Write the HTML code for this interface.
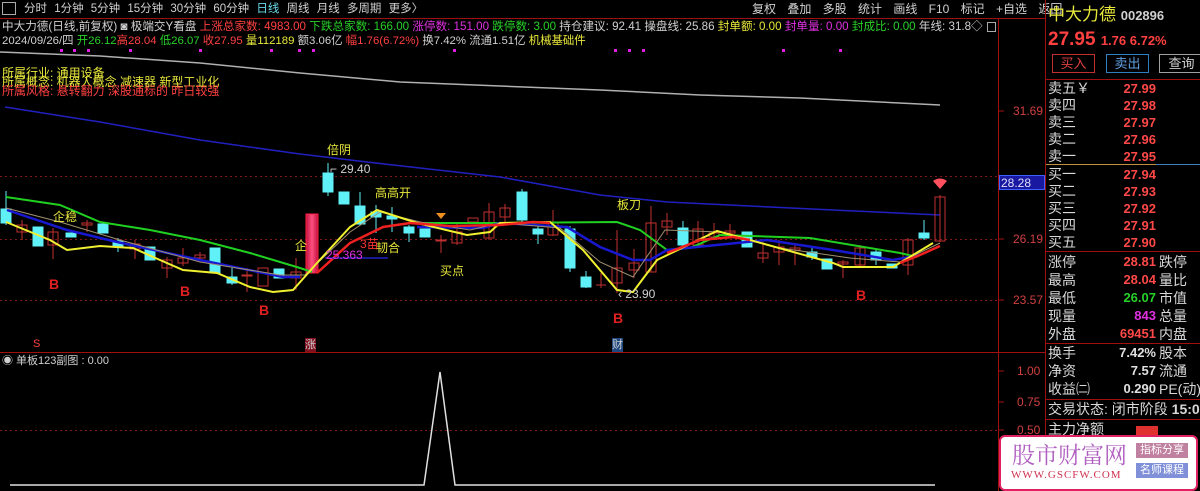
<!DOCTYPE html><html><head><meta charset="utf-8"><style>
*{margin:0;padding:0;box-sizing:border-box}
body{width:1200px;height:491px;background:#000;overflow:hidden;position:relative;font-family:"Liberation Sans","Noto Sans CJK SC",sans-serif;font-size:12px;color:#c8c8c8}
.a{position:absolute;white-space:nowrap;line-height:14px}
.y{color:#e8e83c}.r{color:#ff4040}.g{color:#28d028}.m{color:#e030e0}.w{color:#d0d0d0}.cy{color:#6ad8e8}
.rp{position:absolute;left:1048px;font-size:14px;line-height:17px;color:#d8d8d8}
.rv{position:absolute;font-size:13px;font-weight:bold;line-height:17px;color:#ff4848;text-align:right}
</style></head><body>
<!-- toolbar -->
<div class="a" style="left:2px;top:2px;width:14px;height:13px;border:1px solid #aaa"></div>
<div class="a w" style="left:24px;top:2px;word-spacing:4px;font-size:11.5px">分时 1分钟 5分钟 15分钟 30分钟 60分钟 <span class="cy">日线</span> 周线 月线 多周期 更多〉</div>
<div class="a w" style="left:752px;top:2px;word-spacing:8px">复权 叠加 多股 统计 画线 F10 标记 +自选 返回</div>
<div class="a" style="left:0;top:18px;width:1045px;height:1px;background:#a01010"></div>
<div class="a w" style="left:2px;top:20px;font-size:11.6px">中大力德(日线,前复权) ◙ 极端交Y看盘 <span class="r">上涨总家数: 4983.00</span> <span class="g">下跌总家数: 166.00</span> <span class="m">涨停数: 151.00</span> <span class="g">跌停数: 3.00</span> 持仓建议: 92.41 操盘线: 25.86 <span class="y">封单额: 0.00</span> <span class="m">封单量: 0.00</span> <span class="g">封成比: 0.00</span> 年线: 31.8◇</div>
<div class="a" style="left:987px;top:22px;width:9px;height:10px;border:1px solid #aaa"></div>
<div class="a w" style="left:2px;top:34px;font-size:11.4px">2024/09/26/四 <span class="g">开26.12</span><span class="r">高28.04</span> <span class="g">低26.07</span> <span class="r">收27.95</span> <span class="y">量112189</span> 额3.06亿 <span class="r">幅1.76(6.72%)</span> 换7.42% 流通1.51亿 <span class="y">机械基础件</span></div>
<div class="a y" style="left:2px;top:66px">所属行业: 通用设备</div>
<div class="a y" style="left:2px;top:75px">所属概念: 机器人概念 减速器 新型工业化</div>
<div class="a r" style="left:2px;top:84px">所属风格: 悬转翻力 深股通标的 昨日较强</div>
<svg class="a" style="left:0;top:0" width="1045" height="491">
<g fill="#e020e0"><rect x="60" y="49" width="3" height="3"/><rect x="73" y="49" width="3" height="3"/><rect x="87" y="49" width="3" height="3"/><rect x="129" y="49" width="3" height="3"/><rect x="199" y="49" width="3" height="3"/><rect x="270" y="49" width="3" height="3"/><rect x="298" y="49" width="3" height="3"/><rect x="312" y="49" width="3" height="3"/><rect x="453" y="49" width="3" height="3"/><rect x="614" y="49" width="3" height="3"/><rect x="628" y="49" width="3" height="3"/><rect x="642" y="49" width="3" height="3"/><rect x="782" y="49" width="3" height="3"/><rect x="839" y="49" width="3" height="3"/></g>
<line x1="998.5" y1="18" x2="998.5" y2="491" stroke="#a01010"/>
<line x1="0" y1="352.5" x2="1045" y2="352.5" stroke="#a01010"/>
<g stroke="#801818" stroke-dasharray="2,3"><line x1="0" y1="176.5" x2="998" y2="176.5"/><line x1="0" y1="239.5" x2="998" y2="239.5"/><line x1="0" y1="300.5" x2="998" y2="300.5"/><line x1="0" y1="430.5" x2="998" y2="430.5"/></g>
<g stroke="#a01010"><line x1="999" y1="111" x2="1004" y2="111"/><line x1="999" y1="239" x2="1004" y2="239"/><line x1="999" y1="300" x2="1004" y2="300"/><line x1="999" y1="371" x2="1004" y2="371"/><line x1="999" y1="402" x2="1004" y2="402"/><line x1="999" y1="430" x2="1004" y2="430"/></g>
<polyline fill="none" stroke="#b0b0b0" stroke-width="1.5" points="0,52 100,56 200,63 300,73 400,82 500,86 600,90 700,95 800,98 940,105"/>
<polyline fill="none" stroke="#2020c0" stroke-width="1.5" points="5,107 100,122 200,140 300,154 367,162 500,177 600,195 667,202 833,210 940,215"/>
<g stroke="#c03030" fill="none">
<line x1="22" y1="220" x2="22" y2="240"/><rect x="17" y="225" width="10" height="7"/>
<line x1="53" y1="228" x2="53" y2="259"/><rect x="48" y="232" width="10" height="13"/>
<line x1="87" y1="220" x2="87" y2="232"/><rect x="82" y="223" width="10" height="2"/>
<line x1="135" y1="240" x2="135" y2="259"/><rect x="130" y="244" width="10" height="5"/>
<line x1="167" y1="257" x2="167" y2="278"/><rect x="162" y="260" width="10" height="8"/>
<line x1="183" y1="248" x2="183" y2="266"/><rect x="178" y="258" width="10" height="5"/>
<line x1="200" y1="252" x2="200" y2="262"/><rect x="195" y="255" width="10" height="3"/>
<line x1="247" y1="268" x2="247" y2="292"/><rect x="242" y="275" width="10" height="1"/>
<rect x="258" y="268" width="10" height="18"/>
<line x1="296" y1="258" x2="296" y2="290"/><rect x="291" y="272" width="10" height="6"/>
<line x1="441" y1="235" x2="441" y2="253"/><rect x="436" y="240" width="10" height="1"/>
<rect x="452" y="232" width="10" height="11"/><line x1="457" y1="222" x2="457" y2="245"/>
<rect x="468" y="218" width="10" height="4"/>
<line x1="489" y1="203" x2="489" y2="240"/><rect x="484" y="212" width="10" height="26"/>
<line x1="505" y1="204" x2="505" y2="222"/><rect x="500" y="208" width="10" height="9"/>
<line x1="553" y1="210" x2="553" y2="236"/><rect x="548" y="222" width="10" height="13"/>
<line x1="601" y1="273" x2="601" y2="288"/><line x1="596" y1="285" x2="606" y2="285"/>
<line x1="617" y1="230" x2="617" y2="293"/><rect x="612" y="268" width="10" height="15"/>
<line x1="634" y1="249" x2="634" y2="278"/><rect x="629" y="263" width="10" height="7"/>
<line x1="651" y1="206" x2="651" y2="272"/><rect x="646" y="223" width="10" height="49"/>
<line x1="667" y1="213" x2="667" y2="235"/><rect x="662" y="221" width="10" height="6"/>
<line x1="698" y1="221" x2="698" y2="246"/><rect x="693" y="229" width="10" height="16"/>
<line x1="714" y1="223" x2="714" y2="240"/><rect x="709" y="233" width="10" height="4"/>
<line x1="730" y1="224" x2="730" y2="238"/><rect x="725" y="231" width="10" height="2"/>
<line x1="763" y1="242" x2="763" y2="263"/><rect x="758" y="253" width="10" height="5"/>
<line x1="779" y1="240" x2="779" y2="265"/><rect x="774" y="247" width="10" height="5"/>
<line x1="795" y1="245" x2="795" y2="265"/><rect x="790" y="248" width="10" height="2"/>
<line x1="843" y1="260" x2="843" y2="278"/><rect x="838" y="262" width="10" height="2"/>
<line x1="860" y1="245" x2="860" y2="266"/><rect x="855" y="248" width="10" height="17"/>
<line x1="908" y1="238" x2="908" y2="275"/><rect x="903" y="240" width="10" height="25"/>
<line x1="940" y1="195" x2="940" y2="242"/><rect x="935" y="197" width="10" height="44"/>
</g>
<g fill="#60f0f8" stroke="#60f0f8">
<line x1="6" y1="191" x2="6" y2="225"/><rect x="1" y="209" width="10" height="14"/>
<rect x="33" y="227" width="10" height="19"/>
<rect x="66" y="233" width="10" height="4"/>
<rect x="98" y="224" width="10" height="9"/>
<line x1="118" y1="238" x2="118" y2="252"/><rect x="113" y="241" width="10" height="6"/>
<rect x="145" y="247" width="10" height="13"/>
<rect x="210" y="248" width="10" height="25"/>
<line x1="232" y1="268" x2="232" y2="285"/><rect x="227" y="277" width="10" height="6"/>
<rect x="274" y="269" width="10" height="9"/>
<line x1="328" y1="163" x2="328" y2="196"/><rect x="323" y="173" width="10" height="19"/>
<rect x="339" y="192" width="10" height="12"/>
<line x1="360" y1="192" x2="360" y2="225"/><rect x="355" y="206" width="10" height="18"/>
<line x1="376" y1="205" x2="376" y2="233"/><rect x="371" y="212" width="10" height="5"/>
<line x1="392" y1="207" x2="392" y2="232"/><rect x="387" y="216" width="10" height="3"/>
<line x1="409" y1="225" x2="409" y2="242"/><rect x="404" y="227" width="10" height="6"/>
<rect x="420" y="229" width="10" height="8"/>
<line x1="522" y1="189" x2="522" y2="222"/><rect x="517" y="192" width="10" height="28"/>
<line x1="538" y1="226" x2="538" y2="244"/><rect x="533" y="229" width="10" height="5"/>
<line x1="570" y1="226" x2="570" y2="272"/><rect x="565" y="229" width="10" height="39"/>
<line x1="586" y1="271" x2="586" y2="288"/><rect x="581" y="277" width="10" height="10"/>
<line x1="683" y1="221" x2="683" y2="246"/><rect x="678" y="228" width="10" height="17"/>
<rect x="742" y="232" width="10" height="15"/>
<line x1="812" y1="247" x2="812" y2="260"/><rect x="807" y="252" width="10" height="5"/>
<rect x="822" y="259" width="10" height="10"/>
<line x1="876" y1="249" x2="876" y2="265"/><rect x="871" y="252" width="10" height="8"/>
<rect x="887" y="264" width="10" height="4"/>
<line x1="924" y1="220" x2="924" y2="240"/><rect x="919" y="233" width="10" height="5"/>
</g>
<defs><linearGradient id="pk" x1="0" x2="1"><stop offset="0" stop-color="#c01040"/><stop offset=".5" stop-color="#ff5080"/><stop offset="1" stop-color="#c01040"/></linearGradient></defs>
<rect x="306" y="214" width="12" height="59" fill="url(#pk)" stroke="#ff2040"/>
<polyline fill="none" stroke="#20d020" stroke-width="2" points="6,197 60,205 100,222 150,230 200,240 250,253 300,268 312,272"/>
<polyline fill="none" stroke="#20d020" stroke-width="2" points="410,223 500,223 617,222 640,230 667,250 690,248 720,235 810,238 900,253 917,257"/>
<polyline fill="none" stroke="#1818d0" stroke-width="2.5" points="7,210 67,230 117,242 200,260 283,277 300,277"/>
<polyline fill="none" stroke="#1818d0" stroke-width="2.5" points="417,227 483,228 500,223 567,227 600,247 633,260 650,260 667,250 767,240 833,250 893,260 920,255"/>
<polyline fill="none" stroke="#a09070" stroke-width="1" points="6,208 60,222 120,240 200,262 280,275 305,275 350,232 380,212 420,222 470,230 500,223 560,228 600,262 633,277 665,230 720,232 780,248 850,258 900,262 940,243"/>
<polyline fill="none" stroke="#f0f030" stroke-width="2" points="6,222 50,240 67,250 100,246 133,248 160,260 183,270 217,273 250,287 273,292 293,290 317,263 350,227 377,210 417,223 467,235 490,232 500,223 550,222 583,250 617,290 633,292 657,260 717,231 750,240 833,263 843,267 893,267 933,243"/>
<polyline fill="none" stroke="#f02020" stroke-width="2.5" points="317,273 350,243 383,227 410,223 450,226 500,225 533,222 550,223"/>
<polyline fill="none" stroke="#f02020" stroke-width="2.5" points="667,253 700,240 733,237 750,240"/>
<polyline fill="none" stroke="#f02020" stroke-width="2.5" points="900,263 920,255 940,246"/>
<line x1="325" y1="258" x2="388" y2="258" stroke="#2020c0" stroke-width="1.5"/>
<path d="M436 213h10l-5 6z" fill="#f09020"/>
<path d="M933 181 Q940 176 947 181 L940 189z" fill="#ff5060"/>
<polyline fill="none" stroke="#e0e0e0" stroke-width="1.5" points="10,485 424,485 440,372 455,485 935,485"/>
</svg>
<div class="a y" style="left:327px;top:143px">倍阴</div>
<div class="a w" style="left:330px;top:162px">⌐ 29.40</div>
<div class="a y" style="left:375px;top:186px">高高开</div>
<div class="a y" style="left:53px;top:210px">企稳</div>
<div class="a y" style="left:295px;top:239px">企</div>
<div class="a" style="left:360px;top:237px;color:#ff3030">3苗</div>
<div class="a y" style="left:376px;top:241px">韧合</div>
<div class="a m" style="left:326px;top:248px">25.363</div>
<div class="a y" style="left:440px;top:264px">买点</div>
<div class="a y" style="left:617px;top:198px">板刀</div>
<div class="a w" style="left:618px;top:287px">‹ 23.90</div>
<div class="a" style="color:#e02020;font-size:14px;font-weight:bold;left:49px;top:277px">B</div>
<div class="a" style="color:#e02020;font-size:14px;font-weight:bold;left:180px;top:284px">B</div>
<div class="a" style="color:#e02020;font-size:14px;font-weight:bold;left:259px;top:303px">B</div>
<div class="a" style="color:#e02020;font-size:14px;font-weight:bold;left:613px;top:311px">B</div>
<div class="a" style="color:#e02020;font-size:14px;font-weight:bold;left:856px;top:288px">B</div>
<div class="a r" style="left:33px;top:337px;font-size:11px">S</div>
<div class="a w" style="left:305px;top:338px;background:#801020;font-size:11px">涨</div>
<div class="a w" style="left:612px;top:338px;background:#204880;font-size:11px">财</div>
<div class="a w" style="left:2px;top:354px;font-size:11px">◉ 单板123副图 : 0.00</div>
<div class="a" style="left:1013px;top:104px;color:#d04040">31.69</div>
<div class="a" style="left:999px;top:175px;width:46px;height:15px;background:#1818a0;border:1px solid #4060ff;color:#e0e0ff;padding-left:1px">28.28</div>
<div class="a" style="left:1013px;top:232px;color:#d04040">26.19</div>
<div class="a" style="left:1013px;top:293px;color:#d04040">23.57</div>
<div class="a" style="left:1017px;top:364px;color:#d04040">1.00</div>
<div class="a" style="left:1017px;top:395px;color:#d04040">0.75</div>
<div class="a" style="left:1017px;top:423px;color:#d04040">0.50</div>
<!-- right panel -->
<div class="a" style="left:1045px;top:0;width:1px;height:491px;background:#a01010"></div>
<div class="a y" style="left:1048px;top:5px;font-size:17px;line-height:20px">中大力德 <span class="w" style="font-size:13px;font-weight:bold">002896</span></div>
<div class="a r" style="left:1048px;top:30px;font-size:19px;font-weight:bold;line-height:20px">27.95 <span style="font-size:13px">1.76 6.72%</span></div>
<div class="a" style="left:1052px;top:54px;width:43px;height:19px;border:1px solid #c03030;color:#e04040;text-align:center;font-size:13px;line-height:17px">买入</div>
<div class="a" style="left:1106px;top:54px;width:43px;height:19px;border:1px solid #3080c0;color:#60a0e0;text-align:center;font-size:13px;line-height:17px">卖出</div>
<div class="a" style="left:1159px;top:54px;width:45px;height:19px;border:1px solid #a0a0a0;color:#d0d0d0;text-align:center;font-size:13px;line-height:17px">查询</div>
<div class="a" style="left:1046px;top:79px;width:154px;height:1px;background:#a01010"></div>
<div class="rp" style="top:80px">卖五￥<br>卖四<br>卖三<br>卖二<br>卖一</div>
<div class="rv" style="left:1110px;top:80px;width:46px">27.99<br>27.98<br>27.97<br>27.96<br>27.95</div>
<div class="a" style="left:1046px;top:164px;width:110px;height:1px;background:#c09040"></div>
<div class="a" style="left:1156px;top:164px;width:44px;height:1px;background:#4080c0"></div>
<div class="rp" style="top:166px">买一<br>买二<br>买三<br>买四<br>买五</div>
<div class="rv" style="left:1110px;top:166px;width:46px">27.94<br>27.93<br>27.92<br>27.91<br>27.90</div>
<div class="a" style="left:1046px;top:251px;width:154px;height:1px;background:#a01010"></div>
<div class="rp" style="top:253px;line-height:18px">涨停<br>最高<br>最低<br>现量<br>外盘</div>
<div class="rv" style="left:1100px;top:253px;width:56px;line-height:18px">28.81<br>28.04<br><span class="g">26.07</span><br><span class="m">843</span><br>69451</div>
<div class="rp" style="left:1159px;top:253px;line-height:18px">跌停<br>量比<br>市值<br>总量<br>内盘</div>
<div class="a" style="left:1046px;top:343px;width:154px;height:1px;background:#a01010"></div>
<div class="rp" style="top:344px;line-height:18px">换手<br>净资<br>收益㈡</div>
<div class="rv" style="left:1100px;top:344px;width:56px;line-height:18px;color:#e0e0e0">7.42%<br>7.57<br>0.290</div>
<div class="rp" style="left:1159px;top:344px;line-height:18px">股本<br>流通<br>PE(动)</div>
<div class="a" style="left:1046px;top:399px;width:154px;height:1px;background:#a01010"></div>
<div class="rp" style="top:401px">交易状态: 闭市阶段 <b>15:0</b></div>
<div class="a" style="left:1046px;top:419px;width:154px;height:1px;background:#a01010"></div>
<div class="rp" style="top:421px">主力净额</div>
<div class="a" style="left:1136px;top:426px;width:22px;height:10px;background:#e03030"></div>
<!-- watermark -->
<div class="a" style="left:999px;top:435px;width:199px;height:56px;background:#fff;border:2px solid #e02060;border-radius:6px"></div>
<div class="a" style="left:1012px;top:441px;font-size:23px;line-height:26px;color:#b060c0;font-family:'Noto Serif CJK SC',serif">股市财富网</div>
<div class="a" style="left:1011px;top:468px;font-size:11px;color:#d03050;font-family:'Liberation Serif',serif;letter-spacing:1px">WWW.GSCFW.COM</div>
<div class="a" style="left:1136px;top:443px;width:52px;height:15px;background:#c080a0;color:#fff;font-size:11px;text-align:center;line-height:15px">指标分享</div>
<div class="a" style="left:1136px;top:463px;width:52px;height:15px;background:#8090d8;color:#fff;font-size:11px;text-align:center;line-height:15px">名师课程</div>
</body></html>
